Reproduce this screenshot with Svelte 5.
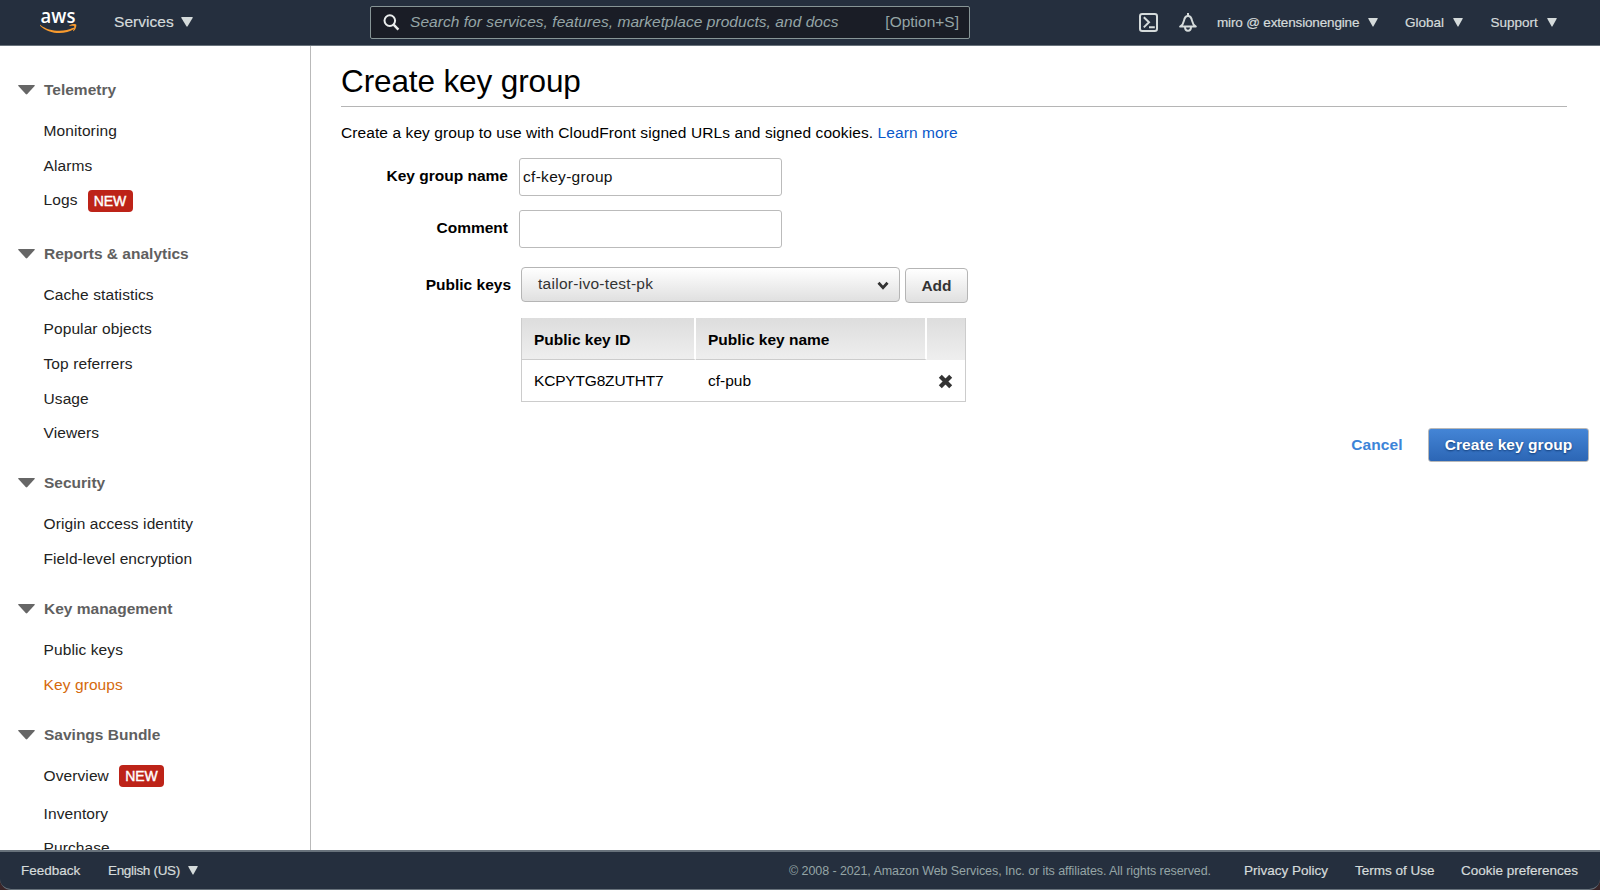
<script>
  const sections = [
    { title: 'Telemetry', items: [{ label: 'Monitoring' }, { label: 'Alarms' }, { label: 'Logs', isNew: true }] },
    {
      title: 'Reports & analytics',
      items: [
        { label: 'Cache statistics' },
        { label: 'Popular objects' },
        { label: 'Top referrers' },
        { label: 'Usage' },
        { label: 'Viewers' }
      ]
    },
    { title: 'Security', items: [{ label: 'Origin access identity' }, { label: 'Field-level encryption' }] },
    { title: 'Key management', items: [{ label: 'Public keys' }, { label: 'Key groups', active: true }] },
    { title: 'Savings Bundle', items: [{ label: 'Overview', isNew: true }, { label: 'Inventory' }, { label: 'Purchase' }] }
  ];
</script>

{#snippet caret(width = 10, height = 9)}
  <svg class="caret" {width} {height} viewBox="0 0 12 10" preserveAspectRatio="none"><path d="M.8 0h10.4q.9 0 .4.9L6.6 9.3q-.6.9-1.2 0L.4.9Q-.1 0 .8 0z" fill="currentColor" /></svg>
{/snippet}

<div class="page">
  <header>
    <svg class="logo" width="38" height="26" viewBox="0 0 38 26">
      <text x=".6" y="13.900" textLength="34.800" lengthAdjust="spacingAndGlyphs">aws</text>
      <path d="M.4 15.900C9 22.800 24 23.600 33.200 18.800c1-.5 1.700.5.8 1.200C25 26 9 25.600.1 16.700c-.4-.6-.1-1 .3-.8z" fill="#f79a2e" />
      <path d="M29.600 16.200c2.400-1.600 6.100-1.500 6.600-.7.5 1-.3 4.900-2.500 6.600-.4.300-.8.100-.6-.4.800-1.800 1.500-3.800 1.100-4.400-.5-.600-2.500-.500-4.300-.4-.5 0-.7-.4-.3-.7z" fill="#f79a2e" />
    </svg>
    <a class="services" href="#services">Services {@render caret(12, 10)}</a>
    <div class="search">
      <svg width="17" height="17" viewBox="0 0 17 17" fill="none" stroke="#eaeded">
        <circle cx="6.8" cy="6.600" r="5.300" stroke-width="2" />
        <path d="M10.600 10.600l4.800 5" stroke-width="2.400" />
      </svg>
      <span class="hint">Search for services, features, marketplace products, and docs</span>
      <span class="key">[Option+S]</span>
    </div>
    <div class="tools">
      <svg class="shell" width="19" height="19" viewBox="0 0 19 19" fill="none" stroke="#d5dbdb" stroke-width="2">
        <rect x="1" y="1" width="17" height="17" rx="2.200" />
        <path d="M4.800 4.300l5.200 5-5.200 5.100M10 14.200h5.800" />
      </svg>
      <svg class="bell" width="18" height="19" viewBox="0 0 18 19" fill="none" stroke="#d5dbdb" stroke-width="2">
        <path d="M9 0v3M1.200 13.600h15.600C14 11.800 13.600 10.600 13 7.600 12.400 4.400 11.300 3 9 3S5.600 4.400 5 7.600c-.6 3-1 4.200-3.800 6z" stroke-linejoin="round" />
        <path d="M6 13.800c0 5.400 6 5.400 6 0" />
      </svg>
      <a class="user" href="#account">miro @ extensionengine {@render caret()}</a>
      <a class="region" href="#region">Global {@render caret()}</a>
      <a class="support" href="#support">Support {@render caret()}</a>
    </div>
  </header>

  <div class="body">
    <nav>
      {#each sections as section}
        <section>
          <h2>
            <svg width="17" height="10" viewBox="0 0 17 10"><path d="M.7 0h15.600q.9.200.3.900L9.300 9q-.8.800-1.600 0L.4.900Q-.2.200.7 0z" fill="#666" /></svg>
            <span>{section.title}</span>
          </h2>
          <ul>
            {#each section.items as item}
              <li class:tall={item.isNew}>
                <a class:active={item.active} href="#nav">{item.label}</a>
                {#if item.isNew}<span class="badge">NEW</span>{/if}
              </li>
            {/each}
          </ul>
        </section>
      {/each}
    </nav>

    <main>
      <h1>Create key group</h1>
      <p>Create a key group to use with CloudFront signed URLs and signed cookies. <a href="#learn">Learn more</a></p>
      <div class="field">
        <label for="name">Key group name</label>
        <input id="name" type="text" value="cf-key-group" />
      </div>
      <div class="field">
        <label for="comment">Comment</label>
        <input id="comment" type="text" />
      </div>
      <div class="keys">
        <span class="label">Public keys</span>
        <div class="select">
          <span>tailor-ivo-test-pk</span>
          <svg width="12" height="9" viewBox="0 0 12 9"><path d="M1.500 1.700L6 6.600l4.500-4.900" fill="none" stroke="#333" stroke-width="2.800" /></svg>
        </div>
        <button class="add">Add</button>
      </div>
      <div class="table">
        <div class="row head">
          <span>Public key ID</span>
          <span>Public key name</span>
          <span></span>
        </div>
        <div class="row">
          <span class="id">KCPYTG8ZUTHT7</span>
          <span>cf-pub</span>
          <span class="remove">
            <svg width="15" height="15" viewBox="0 0 15 15"><path d="M2.300 2.300l10.400 10.400M12.700 2.300L2.300 12.700" stroke="#333" stroke-width="4.200" /></svg>
          </span>
        </div>
      </div>
      <div class="actions">
        <a href="#cancel">Cancel</a>
        <button class="create">Create key group</button>
      </div>
    </main>
  </div>

  <div class="foot-wrap">
    <footer>
      <a class="feedback" href="#feedback">Feedback</a>
      <a class="lang" href="#language">English (US) {@render caret()}</a>
      <span class="copy">© 2008 - 2021, Amazon Web Services, Inc. or its affiliates. All rights reserved.</span>
      <a class="privacy" href="#privacy">Privacy Policy</a>
      <a class="terms" href="#terms">Terms of Use</a>
      <a class="cookies" href="#cookies">Cookie preferences</a>
    </footer>
  </div>
</div>

<style>
  :global(body) { margin: 0; background: #fff; overflow: hidden; }
  * { box-sizing: border-box; }
  .page {
    width: 1600px; height: 890px; display: flex; flex-direction: column; overflow: hidden;
    font-family: "Liberation Sans", Arial, sans-serif; font-size: 15.5px; color: #000; white-space: nowrap;
  }
  a { text-decoration: none; color: inherit; }
  header {
    height: 45.500px; flex: none; display: flex; align-items: center; background: #252f3e;
    border-bottom: 1px solid #68727b; color: #d5dbdb; padding-left: 40px;
  }
  header a, footer a { -webkit-text-stroke: 0.2px currentColor; }
  .logo { overflow: visible; }
  .logo text { font-family: "Open Sans", sans-serif; font-weight: 600; font-size: 20.500px; fill: #fff; }
  .services { width: 256px; margin-left: 36px; font-size: 15.500px; letter-spacing: 0.05px; }
  .caret { margin-left: 2.500px; }
  .search {
    width: 600px; height: 33px; display: flex; align-items: center; border: 1px solid #879596; border-radius: 2px;
    background: #1a1d26; color: #95a5a6; padding: 0 10px 0 12px; font-size: 15.500px;
  }
  .search svg { margin-right: 10px; flex: none; }
  .hint { font-style: italic; flex: 1; letter-spacing: 0.05px; }
  .tools { display: flex; align-items: center; margin-left: 169px; font-size: 13.500px; }
  .bell { margin-left: 21px; }
  .user { margin-left: 20px; width: 188px; letter-spacing: -0.16px; }
  .region { width: 85.500px; }
  .tools .caret { margin-left: 5px; }
  .body { flex: 1; min-height: 0; display: flex; }
  nav { width: 311px; flex: none; border-right: 1px solid #b9b9b9; overflow: hidden; padding-top: 27.500px; }
  section { margin-bottom: 15.600px; }
  h2 { margin: 0 0 6.500px; height: 34.500px; display: flex; align-items: center; padding-left: 18px; font-size: 15.500px; color: #5f6060; }
  h2 svg { margin-right: 9px; }
  ul { list-style: none; margin: 0; padding: 0 0 0 43.500px; display: flex; flex-direction: column; }
  li { height: 34.570px; flex: none; display: flex; align-items: center; color: #222; letter-spacing: 0.1px; }
  li.tall { margin-bottom: 3.300px; }
  .active { color: #d5690b; }
  .badge {
    margin: 1px 0 0 10px; width: 45px; height: 22px; border-radius: 4px; background: #bd2318; color: #fff; font-size: 14px;
    display: flex; align-items: center; justify-content: center; letter-spacing: -0.1px; -webkit-text-stroke: 0.4px #fff;
  }
  main { flex: 1; padding: 14px 0 0 30px; }
  h1 { margin: 0; width: 1226px; height: 47px; border-bottom: 1px solid #b5b5b5; font-size: 31.500px; font-weight: 400; line-height: 43px; letter-spacing: -0.12px; }
  p { margin: 16px 0 15.500px; line-height: 20px; letter-spacing: 0.09px; }
  p a { color: #0a58ca; }
  .field { display: flex; height: 38px; margin-bottom: 14px; }
  label { width: 167px; text-align: right; font-weight: 700; line-height: 36px; }
  input { margin-left: 11px; width: 263px; height: 38px; border: 1px solid #bbb; border-radius: 3px; padding: 0 3px; font: inherit; letter-spacing: 0.3px; color: #111; }
  .keys { display: flex; margin-top: 19px; height: 36px; }
  .label { width: 170px; font-weight: 700; text-align: right; line-height: 36px; margin-right: 10px; }
  .select {
    width: 379px; height: 35px; border: 1px solid #b5b5b5; border-radius: 4px; background: linear-gradient(#fff, #e0e0e0);
    display: flex; justify-content: space-between; align-items: center; padding: 0 10px 1px 16px; color: #333; letter-spacing: 0.28px;
  }
  .select svg { margin-top: 3px; }
  .add {
    margin: 1px 0 0 5px; width: 63px; height: 35px; border: 1px solid #b5b5b5; border-radius: 4px; padding: 1px 0 0;
    background: linear-gradient(#fff, #e0e0e0); font: inherit; font-weight: 700; color: #333;
  }
  .table { margin: 15px 0 0 180px; width: 445px; border: 1px solid #ccc; border-top: 0; }
  .row { display: grid; grid-template-columns: 174px 231px 38px; height: 41px; align-items: center; }
  .row > span { padding: 1px 0 0 12px; }
  .row > .id { letter-spacing: -0.18px; }
  .row.head { height: 42px; font-weight: 700; }
  .head > span {
    height: 42px; line-height: 42px; background: linear-gradient(#ddd, #eee); border-bottom: 1px solid #ccc;
    border-right: 2px solid #fff;
  }
  .head > span:last-child { border-bottom-color: #eee; border-right: 0; }
  .row > .remove { padding: 2px 0 0 11px; line-height: 0; }
  .actions { display: flex; justify-content: flex-end; align-items: center; margin-top: 25.500px; padding-right: 11px; font-weight: 700; }
  .actions a { color: #3c84d8; margin-right: 25.500px; padding-top: 1px; letter-spacing: 0.05px; }
  .create {
    width: 161px; height: 34px; border: 1px solid #b8b8b8; border-radius: 3px; padding: 1px 0 0; font: inherit; letter-spacing: 0.06px; color: #fff;
    background: linear-gradient(#4485d6, #2c66b5); text-shadow: 0 1px 2px #123b75;
  }
  .foot-wrap { flex: none; height: 40px; background: #3a2528; }
  footer {
    height: 40px; background: #252f3e; border: 1px solid #68727b; border-top-width: 2px; border-left: 0; border-right: 0; border-radius: 0 0 11px 11px;
    display: flex; align-items: center; padding-left: 21px; color: #d5dbdb; font-size: 13.500px;
  }
  .feedback { width: 87px; }
  .lang { width: 681px; letter-spacing: -0.32px; }
  .lang .caret { margin-left: 5px; }
  .copy { width: 455px; color: #95a5a6; font-size: 12.500px; letter-spacing: -0.08px; }
  .privacy { width: 111px; }
  .terms { width: 106px; }
</style>
